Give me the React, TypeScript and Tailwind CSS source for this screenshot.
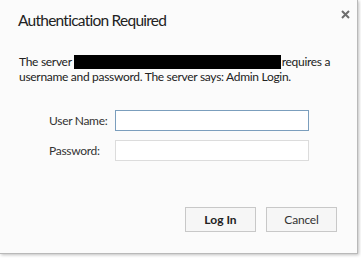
import React from "react";

export default function App() {
  const font = { fontFamily: 'Lato, "Noto Sans", sans-serif' };
  return (
    <div className="w-[361px] h-[258px] bg-white" style={font}>
      <div className="relative w-[358px] h-[254px] bg-[#fbfbfb] border-r border-b border-[#b9b9b9] shadow-[1px_1px_3px_rgba(0,0,0,0.25)] flex flex-col whitespace-nowrap">
        <button className="absolute left-[340px] top-[9px] w-[10px] h-[10px] flex items-center justify-center">
          <svg width="9" height="9" viewBox="0 0 9 9">
            <path d="M1 1L8 8M8 1L1 8" stroke="#6e6e6e" strokeWidth="2" />
          </svg>
        </button>
        <div className="pl-[18px] pt-[10px] text-[15.5px] leading-[20px] tracking-[-0.75px] text-[#222]">Authentication Required</div>
        <div className="pl-[19px] pt-[24px] pr-[20px] text-[12px] leading-[15px] tracking-[-0.3px] text-[#222]">
          <div className="flex items-center">
            <span>The server</span>
            <span className="inline-block w-[207px] h-[14px] bg-black ml-[2px] mr-[1px]"></span>
            <span>requires a</span>
          </div>
          <div>username and password. The server says: Admin Login.</div>
        </div>
        <div className="mt-[26px] pl-[49px] grid grid-cols-[66px_194px] gap-y-[9px] items-center text-[12px] tracking-[-0.3px] text-[#333]">
          <span>User Name:</span>
          <input className="h-[21px] border border-[#7b9ebd] bg-white outline-none" />
          <span>Password:</span>
          <input type="password" className="h-[21px] border border-[#dcdcdc] bg-white outline-none" />
        </div>
        <div className="mt-[46px] pl-[185px] flex gap-[10px] text-[12px]">
          <button className="w-[71px] h-[25px] border border-[#c8c8c8] bg-[#f6f6f6] font-bold text-[#222]">Log In</button>
          <button className="w-[71px] h-[25px] border border-[#c8c8c8] bg-[#f6f6f6] text-[#333] tracking-[-0.2px]">Cancel</button>
        </div>
      </div>
    </div>
  );
}
